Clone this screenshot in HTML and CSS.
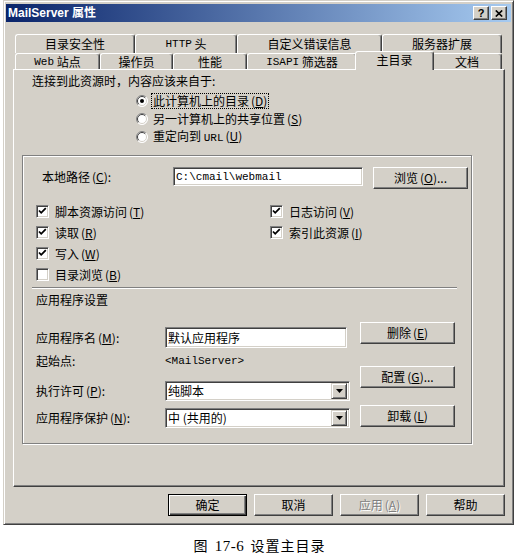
FILE: index.html
```html
<!DOCTYPE html>
<html lang="zh-CN">
<head>
<meta charset="utf-8">
<title>MailServer 属性</title>
<link rel="stylesheet" href="styles.css">
</head>
<body>
<div class="window">
  <div class="titlebar">
    <span class="title-text">MailServer 属性</span>
    <div class="title-buttons">
      <span class="tbtn help">?</span>
      <span class="tbtn close"><svg width="8" height="7" viewBox="0 0 8 7"><path d="M0.8 0.5L7.2 6.5M7.2 0.5L0.8 6.5" stroke="#000" stroke-width="1.7"/></svg></span>
    </div>
  </div>
  <div class="body">
    <div class="tabs">
      <div class="tabrow back">
        <div class="tab t-a">目录安全性</div>
        <div class="tab t-b"><span class="lat">HTTP</span>&nbsp;头</div>
        <div class="tab t-c">自定义错误信息</div>
        <div class="tab t-d">服务器扩展</div>
      </div>
      <div class="tabrow front">
        <div class="tab t-e"><span class="lat">Web</span>&nbsp;站点</div>
        <div class="tab t-f">操作员</div>
        <div class="tab t-g">性能</div>
        <div class="tab t-h"><span class="lat">ISAPI</span>&nbsp;筛选器</div>
        <div class="tab t-i selected">主目录</div>
        <div class="tab t-j">文档</div>
      </div>
    </div>
    <div class="panel">
      <div class="src-label">连接到此资源时，内容应该来自于:</div>
      <div class="radios">
        <div class="radio-row">
          <svg class="radio" width="12" height="12" viewBox="0 0 12 12"><circle cx="6" cy="6" r="5.5" fill="#fff"/><path d="M2.1 9.9A5.5 5.5 0 0 1 9.9 2.1" fill="none" stroke="#808080"/><path d="M2.8 9.2A4.5 4.5 0 0 1 9.2 2.8" fill="none" stroke="#404040"/><path d="M9.9 2.1A5.5 5.5 0 0 1 2.1 9.9" fill="none" stroke="#fff"/><path d="M9.2 2.8A4.5 4.5 0 0 1 2.8 9.2" fill="none" stroke="#d4d0c8"/><circle cx="6" cy="6" r="2" fill="#000"/></svg>
          <span class="focus">此计算机上的目录<span class="mn">(<u>D</u>)</span></span>
        </div>
        <div class="radio-row">
          <svg class="radio" width="12" height="12" viewBox="0 0 12 12"><circle cx="6" cy="6" r="5.5" fill="#fff"/><path d="M2.1 9.9A5.5 5.5 0 0 1 9.9 2.1" fill="none" stroke="#808080"/><path d="M2.8 9.2A4.5 4.5 0 0 1 9.2 2.8" fill="none" stroke="#404040"/><path d="M9.9 2.1A5.5 5.5 0 0 1 2.1 9.9" fill="none" stroke="#fff"/><path d="M9.2 2.8A4.5 4.5 0 0 1 2.8 9.2" fill="none" stroke="#d4d0c8"/></svg>
          <span>另一计算机上的共享位置<span class="mn">(<u>S</u>)</span></span>
        </div>
        <div class="radio-row">
          <svg class="radio" width="12" height="12" viewBox="0 0 12 12"><circle cx="6" cy="6" r="5.5" fill="#fff"/><path d="M2.1 9.9A5.5 5.5 0 0 1 9.9 2.1" fill="none" stroke="#808080"/><path d="M2.8 9.2A4.5 4.5 0 0 1 9.2 2.8" fill="none" stroke="#404040"/><path d="M9.9 2.1A5.5 5.5 0 0 1 2.1 9.9" fill="none" stroke="#fff"/><path d="M9.2 2.8A4.5 4.5 0 0 1 2.8 9.2" fill="none" stroke="#d4d0c8"/></svg>
          <span>重定向到 <span class="lat">URL</span><span class="mn">(<u>U</u>)</span></span>
        </div>
      </div>

      <div class="group">
        <div class="path-row">
          <span class="path-label">本地路径<span class="mn">(<u>C</u>)</span>:</span>
          <div class="field path-field"><span class="lat">C:\cmail\webmail</span></div>
          <div class="btn browse">浏览<span class="mn">(<u>O</u>)...</span></div>
        </div>

        <div class="checks">
          <div class="check-col left">
            <div class="check-row"><span class="cb"><svg width="11" height="11" viewBox="0 0 11 11"><path d="M2 4.5L4.2 6.8L8.8 2.2" fill="none" stroke="#000" stroke-width="1.8"/></svg></span><span>脚本资源访问<span class="mn">(<u>T</u>)</span></span></div>
            <div class="check-row"><span class="cb"><svg width="11" height="11" viewBox="0 0 11 11"><path d="M2 4.5L4.2 6.8L8.8 2.2" fill="none" stroke="#000" stroke-width="1.8"/></svg></span><span>读取<span class="mn">(<u>R</u>)</span></span></div>
            <div class="check-row"><span class="cb"><svg width="11" height="11" viewBox="0 0 11 11"><path d="M2 4.5L4.2 6.8L8.8 2.2" fill="none" stroke="#000" stroke-width="1.8"/></svg></span><span>写入<span class="mn">(<u>W</u>)</span></span></div>
            <div class="check-row"><span class="cb"></span><span>目录浏览<span class="mn">(<u>B</u>)</span></span></div>
          </div>
          <div class="check-col right">
            <div class="check-row"><span class="cb"><svg width="11" height="11" viewBox="0 0 11 11"><path d="M2 4.5L4.2 6.8L8.8 2.2" fill="none" stroke="#000" stroke-width="1.8"/></svg></span><span>日志访问<span class="mn">(<u>V</u>)</span></span></div>
            <div class="check-row"><span class="cb"><svg width="11" height="11" viewBox="0 0 11 11"><path d="M2 4.5L4.2 6.8L8.8 2.2" fill="none" stroke="#000" stroke-width="1.8"/></svg></span><span>索引此资源<span class="mn">(<u>I</u>)</span></span></div>
          </div>
        </div>

        <div class="separator"></div>
        <div class="app-title">应用程序设置</div>

        <div class="app">
          <div class="app-fields">
            <div class="arow r1"><span class="alabel">应用程序名<span class="mn">(<u>M</u>)</span>:</span><div class="field name-field">默认应用程序</div></div>
            <div class="arow r2"><span class="alabel">起始点:</span><span class="lat">&lt;MailServer&gt;</span></div>
            <div class="arow r3"><span class="alabel">执行许可<span class="mn">(<u>P</u>)</span>:</span><div class="field select">纯脚本<span class="dd"><svg width="7" height="4" viewBox="0 0 7 4"><path d="M0 0H7L3.5 4Z" fill="#000"/></svg></span></div></div>
            <div class="arow r4"><span class="alabel">应用程序保护<span class="mn">(<u>N</u>)</span>:</span><div class="field select">中 (共用的)<span class="dd"><svg width="7" height="4" viewBox="0 0 7 4"><path d="M0 0H7L3.5 4Z" fill="#000"/></svg></span></div></div>
          </div>
          <div class="app-buttons">
            <div class="btn b-del">删除<span class="mn">(<u>E</u>)</span></div>
            <div class="btn b-cfg">配置<span class="mn">(<u>G</u>)...</span></div>
            <div class="btn b-unl">卸载<span class="mn">(<u>L</u>)</span></div>
          </div>
        </div>
      </div>
    </div>

    <div class="footer">
      <div class="btn fbtn default">确定</div>
      <div class="btn fbtn">取消</div>
      <div class="btn fbtn disabled">应用<span class="mn">(<u>A</u>)</span></div>
      <div class="btn fbtn">帮助</div>
    </div>
  </div>
</div>
<div class="caption">图 <span class="num">17-6</span> 设置主目录</div>
</body>
</html>
```
FILE: styles.css
```css
* { box-sizing: border-box; }
html, body { margin: 0; padding: 0; background: #fff; }
body {
  width: 519px;
  height: 555px;
  overflow: hidden;
  font-family: "Noto Sans CJK SC", "Liberation Sans", sans-serif;
  font-size: 12px;
  line-height: 14px;
  color: #000;
}
u { text-decoration: underline; text-underline-offset: 1px; }
.mn { margin-left: 2px; }
.lat { font-family: "Liberation Mono", "Noto Sans CJK SC", monospace; font-size: 11px; }

.window {
  margin-left: 3px;
  width: 511px;
  height: 525px;
  background: #d4d0c8;
  border: 1px solid;
  border-color: #d4d0c8 #404040 #404040 #d4d0c8;
  box-shadow: inset 1px 1px #fff, inset -1px -1px #808080;
  padding: 3px 2px 0 2px;
}

.titlebar {
  height: 18px;
  display: flex;
  align-items: center;
  justify-content: space-between;
  padding: 0 4px 0 2px;
  background: linear-gradient(to right, #0a246a, #a6caf0);
}
.title-text {
  color: #fff;
  font-family: "Liberation Sans", "Noto Sans CJK SC", sans-serif;
  font-weight: bold;
  font-size: 12px;
}
.title-buttons { display: flex; gap: 2px; }
.tbtn {
  width: 16px;
  height: 14px;
  background: #d4d0c8;
  border: 1px solid;
  border-color: #fff #404040 #404040 #fff;
  box-shadow: inset -1px -1px #808080;
  display: flex;
  align-items: center;
  justify-content: center;
  font-family: "Liberation Sans", sans-serif;
  font-weight: bold;
  font-size: 11px;
  line-height: 11px;
}

.body { padding: 12px 6px 0 7px; }

.tabs { padding-left: 2px; }
.tabrow { display: flex; }
.tabrow.back { height: 19px; }
.tabrow.front { height: 16px; }
.tab {
  background: #d4d0c8;
  border-top: 1px solid #fff;
  border-left: 1px solid #fff;
  border-right: 1px solid #404040;
  box-shadow: inset -1px 0 #808080;
  border-radius: 3px 3px 0 0;
  display: flex;
  align-items: center;
  justify-content: center;
  white-space: nowrap;
}
.back .tab { padding-bottom: 1px; }
.t-a { width: 120px; }
.t-b { width: 102px; }
.t-c { width: 145px; }
.t-d { width: 120px; }
.t-e { width: 85px; }
.t-f { width: 73px; }
.t-g { width: 74px; }
.t-h { width: 110px; }
.t-i { width: 75px; }
.t-j { width: 70px; }
.tab.selected {
  position: relative;
  z-index: 2;
  width: 79px;
  height: 19px;
  margin: -2px -2px -1px;
  align-items: flex-start;
  padding-top: 1px;
}

.panel {
  height: 418px;
  border: 1px solid;
  border-color: #fff #404040 #404040 #fff;
  box-shadow: inset -1px -1px #808080;
}
.src-label { margin: 4px 0 0 18px; }
.radios { margin: 4px 0 0 122px; }
.radio-row { display: flex; align-items: center; height: 18px; gap: 5px; }
.radio { flex: none; }
.focus { outline: 1px dotted #000; outline-offset: 0; padding: 0 1px; margin-left: -1px; }

.group {
  margin: 9px 0 0 8px;
  width: 450px;
  height: 289px;
  border: 1px solid #808080;
  box-shadow: 1px 1px 0 #fff, inset 1px 1px #fff;
}

.field {
  background: #fff;
  border: 1px solid;
  border-color: #808080 #fff #fff #808080;
  box-shadow: inset 1px 1px #404040, inset -1px -1px #d4d0c8;
  padding: 0 2px;
  display: flex;
  align-items: center;
  white-space: nowrap;
}
.btn {
  height: 22px;
  background: #d4d0c8;
  border: 1px solid;
  border-color: #fff #404040 #404040 #fff;
  box-shadow: inset -1px -1px #808080;
  display: flex;
  align-items: center;
  justify-content: center;
  white-space: nowrap;
}

.path-row { display: flex; align-items: flex-start; margin: 11px 0 0 19px; height: 22px; }
.path-label { width: 131px; line-height: 20px; }
.path-field { width: 190px; height: 19px; }
.browse { width: 95px; margin-left: 10px; }

.checks { display: flex; margin: 12px 0 0 13px; }
.check-col.left { width: 234px; }
.check-row { display: flex; align-items: center; gap: 6px; height: 21px; }
.cb {
  flex: none;
  width: 13px;
  height: 13px;
  background: #fff;
  border: 1px solid;
  border-color: #808080 #fff #fff #808080;
  box-shadow: inset 1px 1px #404040, inset -1px -1px #d4d0c8;
  display: flex;
}

.separator {
  margin: 2px 0 0 9px;
  width: 425px;
  height: 2px;
  border-top: 1px solid #808080;
  border-bottom: 1px solid #fff;
}
.app-title { margin: 4px 0 0 13px; }

.app { display: flex; margin: 15px 0 0 13px; }
.app-fields { margin-top: 5px; }
.arow { display: flex; align-items: center; }
.alabel { width: 129px; flex: none; }
.r1 { height: 21px; }
.r2 { height: 20px; margin-top: 3px; }
.r3 { height: 20px; margin-top: 10px; }
.r4 { height: 20px; margin-top: 7px; }
.name-field { width: 182px; height: 21px; }
.select { width: 185px; height: 20px; padding-right: 2px; }
.dd {
  margin-left: auto;
  width: 16px;
  height: 16px;
  background: #d4d0c8;
  border: 1px solid;
  border-color: #d4d0c8 #404040 #404040 #d4d0c8;
  box-shadow: inset 1px 1px #fff, inset -1px -1px #808080;
  display: flex;
  align-items: center;
  justify-content: center;
}
.app-buttons { margin-left: 10px; display: flex; flex-direction: column; }
.app-buttons .btn { width: 95px; }
.b-cfg { margin-top: 22px; }
.b-unl { margin-top: 17px; }

.footer { display: flex; justify-content: flex-end; gap: 7px; margin-top: 7px; }
.fbtn { width: 79px; }
.fbtn.default {
  border: 1px solid #000;
  box-shadow: inset 1px 1px #fff, inset -1px -1px #404040, inset -2px -2px #808080;
}
.fbtn.disabled { color: #808080; text-shadow: 1px 1px #fff; }

.caption {
  margin-top: 12px;
  text-align: center;
  font-size: 14px;
  line-height: 16px;
  letter-spacing: 1px;
  word-spacing: 2px;
}
.caption .num { font-family: "Liberation Serif", serif; font-size: 15px; letter-spacing: 0.5px; }
```
